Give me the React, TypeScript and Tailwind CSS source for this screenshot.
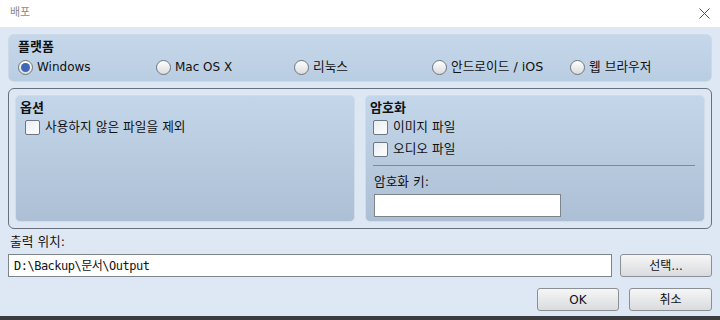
function Radio({ label, checked, ko }: { label: string; checked?: boolean; ko?: boolean }) {
  return (
    <label className="flex items-center gap-[4px] w-[138px]">
      <span className="w-[15px] h-[15px] rounded-full border border-[#6d7683] bg-gradient-to-b from-white to-[#dcdcdc] flex items-center justify-center">
        {checked && <span className="w-[9px] h-[9px] rounded-full bg-[#3f67b5]"></span>}
      </span>
      <span className={ko ? 'text-[12.7px]' : ''}>{label}</span>
    </label>
  )
}

function Check({ label }: { label: string }) {
  return (
    <label className="flex items-center gap-[5px] h-[22px] text-[12.7px]">
      <span className="w-[15px] h-[15px] rounded-[2px] border border-[#6d7683] bg-gradient-to-br from-[#e9edf1] to-white"></span>
      <span>{label}</span>
    </label>
  )
}

function Btn({ label, w }: { label: string; w: string }) {
  return (
    <button className={`${w} h-[23px] rounded-[3px] border border-[#8b8f96] bg-gradient-to-b from-[#f6f6f6] to-[#d9dbde] text-[#111]`}>
      {label}
    </button>
  )
}

export default function App() {
  return (
    <div className="w-[720px] h-[320px] flex flex-col text-[12px] text-[#111] font-['DejaVu_Sans','Noto_Sans_CJK_KR',sans-serif]">
      <div className="h-[27px] bg-white flex items-center justify-between pl-[10px] pr-[8px] shrink-0">
        <span className="text-[11px] text-[#8a8a8a]">배포</span>
        <svg width="11" height="11" viewBox="0 0 11 11" className="mr-[2px]">
          <path d="M0.5 0.5L10.5 10.5M10.5 0.5L0.5 10.5" stroke="#555" strokeWidth="1" />
        </svg>
      </div>
      <div className="flex-1 bg-[#dde8f4] px-2 pt-[7px] flex flex-col">
        <div className="h-[48px] rounded-[6px] border border-[#cbd9e8] bg-gradient-to-b from-[#c6d7ea] to-[#b9cde2] pl-[9px] pt-[3px]">
          <div className="font-bold leading-[18px] text-[13px]">플랫폼</div>
          <div className="flex mt-[3px] leading-[16px]">
            <Radio label="Windows" checked />
            <Radio label="Mac OS X" />
            <Radio label="리눅스" ko />
            <Radio label="안드로이드 / iOS" ko />
            <Radio label="웹 브라우저" ko />
          </div>
        </div>
        <div className="mt-[6px] h-[141px] rounded-[6px] border border-[#67717e] bg-[#dce7f3] p-[6px] flex gap-[10px]">
          <div className="flex-1 rounded-[5px] border border-[#d0dcea] bg-gradient-to-b from-[#c4d6e9] to-[#adbfd4] pl-[4px] pt-[3px]">
            <div className="font-bold leading-[18px] text-[13px]">옵션</div>
            <div className="pl-[5px] -mt-[1px]">
              <Check label="사용하지 않은 파일을 제외" />
            </div>
          </div>
          <div className="flex-1 rounded-[5px] border border-[#d0dcea] bg-gradient-to-b from-[#c4d6e9] to-[#adbfd4] pl-[4px] pt-[3px]">
            <div className="font-bold leading-[18px] text-[13px]">암호화</div>
            <div className="pl-[3px] -mt-[1px]">
              <Check label="이미지 파일" />
              <Check label="오디오 파일" />
            </div>
            <div className="h-px bg-[#7d8a99] mt-[5px] mr-[9px] ml-[3px]"></div>
            <div className="pl-[4px] mt-[8px] leading-[16px] text-[12.7px]">암호화 키:</div>
            <div className="ml-[4px] mt-[4px] w-[187px] h-[23px] bg-white border border-[#7e848c]"></div>
          </div>
        </div>
        <div className="mt-[5px] pl-[2px] leading-[16px] text-[12.7px]">출력 위치:</div>
        <div className="mt-[4px] flex gap-[8px]">
          <div className="w-[604px] h-[23px] bg-white border border-[#7e848c] flex items-center pl-[5px] tracking-[-0.5px] font-['DejaVu_Sans_Mono','Noto_Sans_CJK_KR',monospace]">
            D:\Backup\문서\Output
          </div>
          <Btn label="선택..." w="w-[92px]" />
        </div>
        <div className="mt-[11px] flex justify-end gap-[10px]">
          <Btn label="OK" w="w-[82px]" />
          <Btn label="취소" w="w-[83px]" />
        </div>
      </div>
      <div className="h-[4px] bg-[#3a3c3f] shrink-0"></div>
    </div>
  )
}
